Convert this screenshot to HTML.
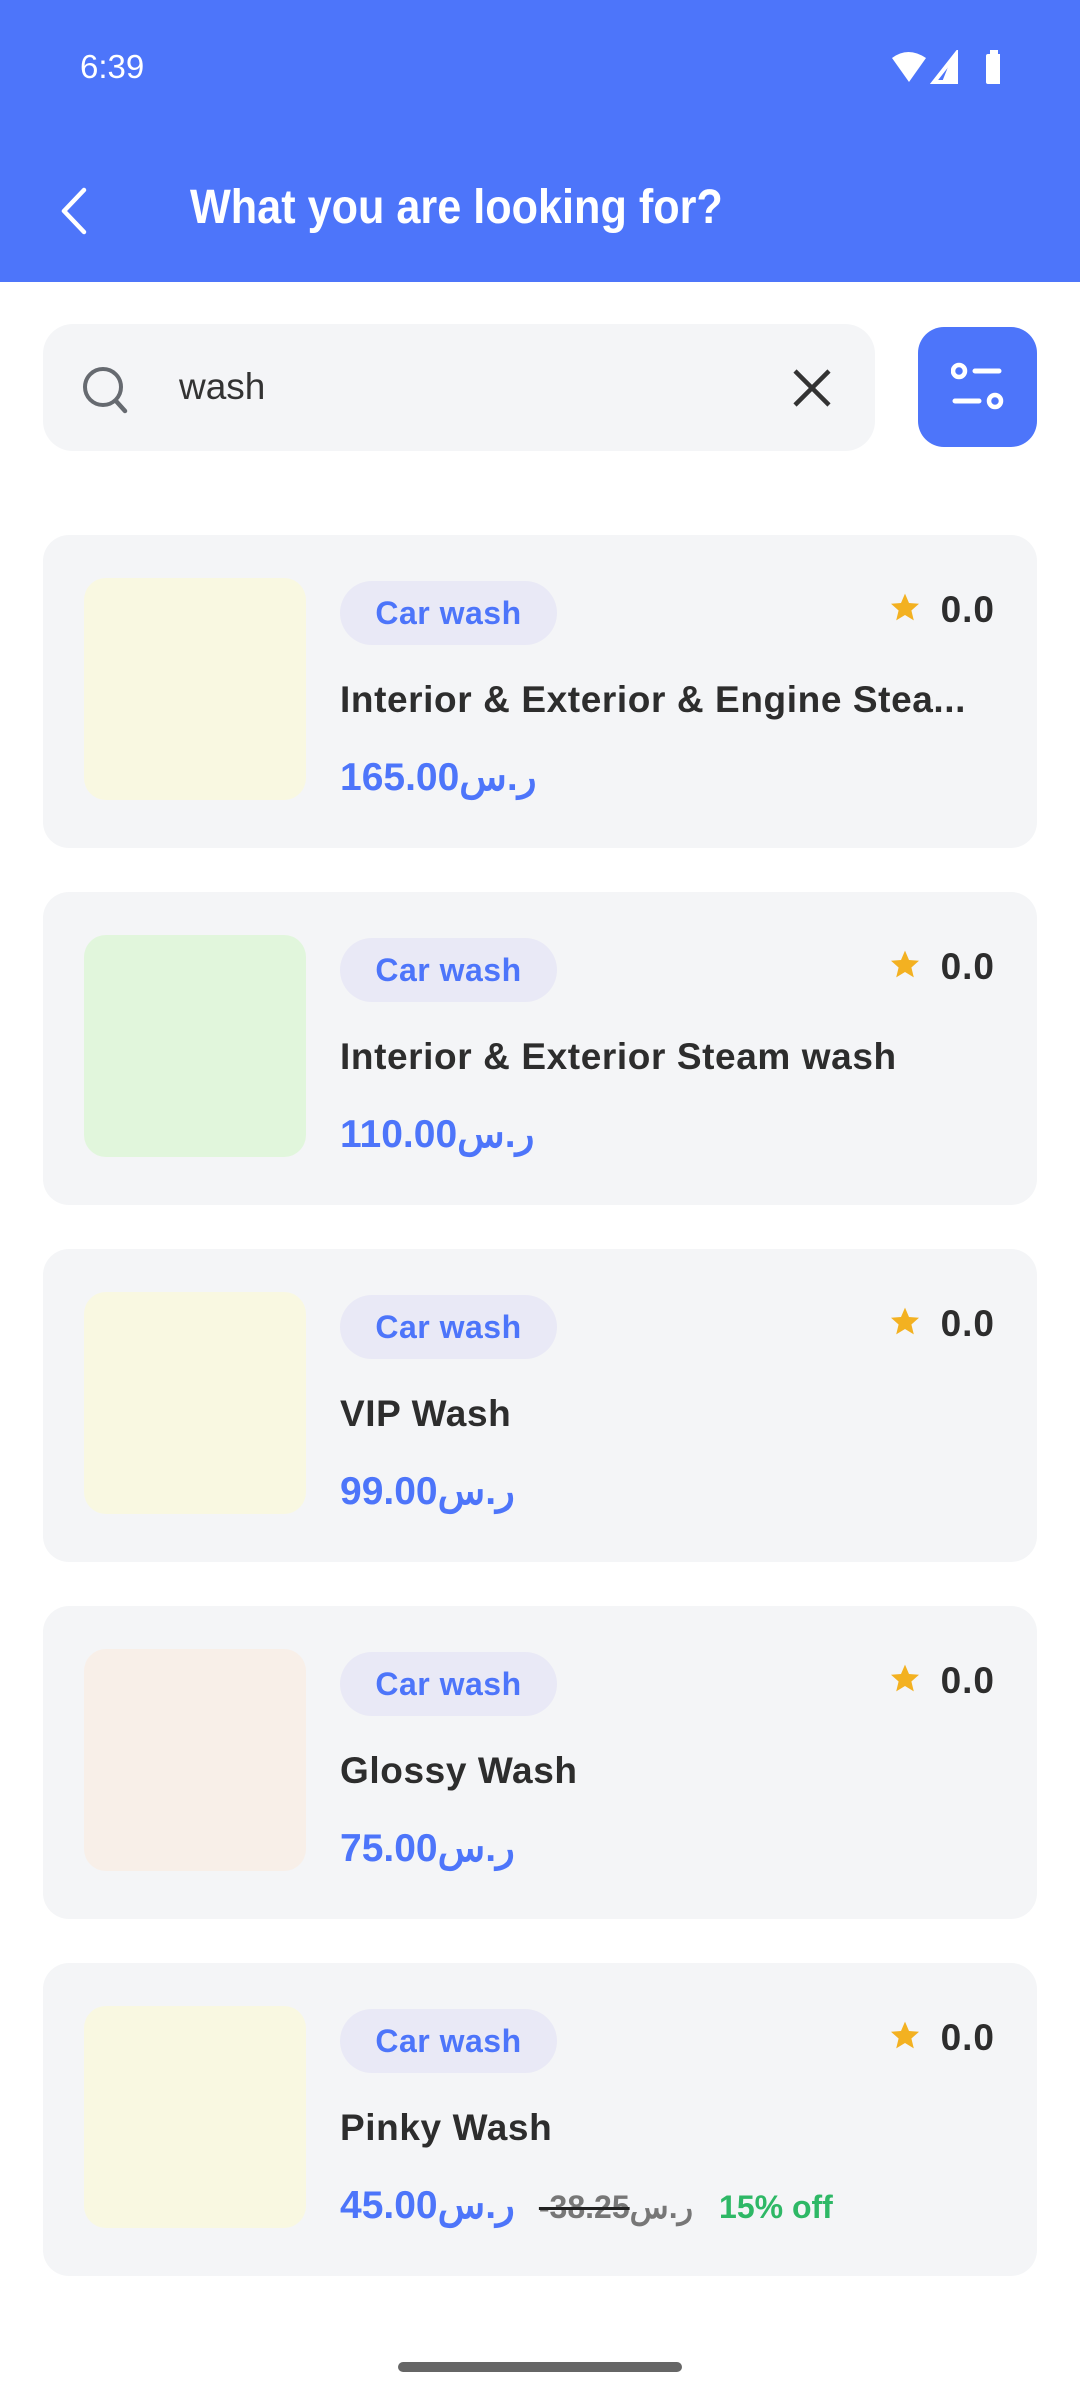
<!DOCTYPE html>
<html><head><meta charset="utf-8"><style>
*{margin:0;padding:0;box-sizing:border-box}
body{width:1080px;height:2400px;background:#fff;font-family:"Liberation Sans","Noto Sans CJK SC",sans-serif;position:relative;overflow:hidden}
.hdr{position:absolute;left:0;top:0;width:1080px;height:282px;background:#4d75fa}
.time{position:absolute;left:80px;top:48px;color:#fff;font-size:33px}
.title{position:absolute;left:190px;top:180px;color:#fff;font-size:48px;font-weight:bold;transform:scaleX(0.9);transform-origin:left;white-space:nowrap}
.search{position:absolute;left:43px;top:324px;width:832px;height:127px;background:#f4f5f7;border-radius:30px}
.wash{position:absolute;font-size:37px;color:#333}
.filter{position:absolute;left:918px;top:327px;width:119px;height:120px;background:#4d75fa;border-radius:26px}
.card{position:absolute;left:43px;width:994px;height:313px;background:#f4f5f7;border-radius:26px}
.img{position:absolute;left:41px;top:43px;width:222px;height:222px;border-radius:22px}
.chip{position:absolute;left:297px;top:46px;width:217px;height:64px;border-radius:32px;background:#e9e9f6;color:#4d75fa;font-weight:bold;font-size:32px;text-align:center;line-height:64px;letter-spacing:0.5px}
.rate{position:absolute;right:42px;top:54px;font-size:37px;font-weight:bold;color:#2d2d2d;letter-spacing:1px}
.star{position:absolute;left:846px;top:56px}
.nm{position:absolute;left:297px;top:144px;font-size:37px;font-weight:bold;color:#2d2d2d;white-space:nowrap;letter-spacing:0.6px}
.pr{position:absolute;left:297px;top:220px;font-size:39px;font-weight:bold;color:#4d75fa;white-space:nowrap;direction:ltr}
.pr span{display:inline-block;unicode-bidi:isolate}
</style></head><body>
<div class="hdr">
<div class="time">6:39</div>
<svg style="position:absolute;left:890px;top:50px" width="110" height="36" viewBox="0 0 110 36">
<path d="M2 8 Q18 -4 36 8 L19 32 Z" fill="#fff"/>
<path d="M44 32 L66 4 L66 32 Z" fill="none" stroke="#fff" stroke-width="4"/>
<path d="M60 12 L66 4 L66 32 L52 32 Z" fill="#fff"/>
<rect x="96" y="4" width="16" height="30" rx="2" fill="#fff"/><rect x="100" y="0" width="8" height="5" fill="#fff"/>
</svg>
<svg style="position:absolute;left:56px;top:186px" width="34" height="50" viewBox="0 0 34 50"><path d="M28 4 L8 25 L28 46" fill="none" stroke="#fff" stroke-width="4.5" stroke-linecap="round" stroke-linejoin="round"/></svg>
<div class="title">What you are looking for?</div>
</div>
<div class="search">
<svg style="position:absolute;left:38px;top:41px" width="50" height="50" viewBox="0 0 50 50"><circle cx="22" cy="22" r="18" fill="none" stroke="#666a70" stroke-width="4"/><path d="M35 36 L44 46" stroke="#666a70" stroke-width="4.5" stroke-linecap="round"/></svg>
<div class="wash" style="left:136px;top:42px">wash</div>
<svg style="position:absolute;left:749px;top:44px" width="40" height="40" viewBox="0 0 40 40"><path d="M3 3 L37 37 M37 3 L3 37" stroke="#333" stroke-width="4.5"/></svg>
</div>
<div class="filter"><svg style="position:absolute;left:33px;top:34px" width="54" height="52" viewBox="0 0 54 52"><circle cx="8" cy="10" r="6" fill="none" stroke="#fff" stroke-width="4.5"/><path d="M24 10 H48 M4 40 H28" stroke="#fff" stroke-width="5" stroke-linecap="round"/><circle cx="44" cy="40" r="6" fill="none" stroke="#fff" stroke-width="4.5"/></svg></div>

<div class="card" style="top:535px"><div class="img" style="background:#f9f8e1"></div><div class="chip">Car wash</div>
<svg class="star" width="32" height="32" viewBox="0 0 24 24"><path d="M12 2l3 7 7.5.6-5.7 5 1.8 7.4L12 18l-6.6 4 1.8-7.4L1.5 9.6 9 9z" fill="#f3b121"/></svg><div class="rate">0.0</div>
<div class="nm">Interior &amp; Exterior &amp; Engine Stea...</div><div class="pr"><span>165.00</span><span dir="rtl">ر.س</span></div></div>

<div class="card" style="top:892px"><div class="img" style="background:#e1f6dc"></div><div class="chip">Car wash</div>
<svg class="star" width="32" height="32" viewBox="0 0 24 24"><path d="M12 2l3 7 7.5.6-5.7 5 1.8 7.4L12 18l-6.6 4 1.8-7.4L1.5 9.6 9 9z" fill="#f3b121"/></svg><div class="rate">0.0</div>
<div class="nm">Interior &amp; Exterior Steam wash</div><div class="pr"><span>110.00</span><span dir="rtl">ر.س</span></div></div>

<div class="card" style="top:1249px"><div class="img" style="background:#f9f8e1"></div><div class="chip">Car wash</div>
<svg class="star" width="32" height="32" viewBox="0 0 24 24"><path d="M12 2l3 7 7.5.6-5.7 5 1.8 7.4L12 18l-6.6 4 1.8-7.4L1.5 9.6 9 9z" fill="#f3b121"/></svg><div class="rate">0.0</div>
<div class="nm">VIP Wash</div><div class="pr"><span>99.00</span><span dir="rtl">ر.س</span></div></div>

<div class="card" style="top:1606px"><div class="img" style="background:#f8efe8"></div><div class="chip">Car wash</div>
<svg class="star" width="32" height="32" viewBox="0 0 24 24"><path d="M12 2l3 7 7.5.6-5.7 5 1.8 7.4L12 18l-6.6 4 1.8-7.4L1.5 9.6 9 9z" fill="#f3b121"/></svg><div class="rate">0.0</div>
<div class="nm">Glossy Wash</div><div class="pr"><span>75.00</span><span dir="rtl">ر.س</span></div></div>

<div class="card" style="top:1963px"><div class="img" style="background:#f9f8e1"></div><div class="chip">Car wash</div>
<svg class="star" width="32" height="32" viewBox="0 0 24 24"><path d="M12 2l3 7 7.5.6-5.7 5 1.8 7.4L12 18l-6.6 4 1.8-7.4L1.5 9.6 9 9z" fill="#f3b121"/></svg><div class="rate">0.0</div>
<div class="nm">Pinky Wash</div>
<div class="pr"><span>45.00</span><span dir="rtl">ر.س</span><span style="font-size:32px;color:#777;text-decoration:line-through;text-decoration-color:#222;margin-left:24px">-38.25<span dir="rtl">ر.س</span></span><span style="font-size:32px;color:#2eb866;margin-left:26px">15% off</span></div></div>

<div style="position:absolute;left:398px;top:2362px;width:284px;height:10px;border-radius:5px;background:#666"></div>
</body></html>
